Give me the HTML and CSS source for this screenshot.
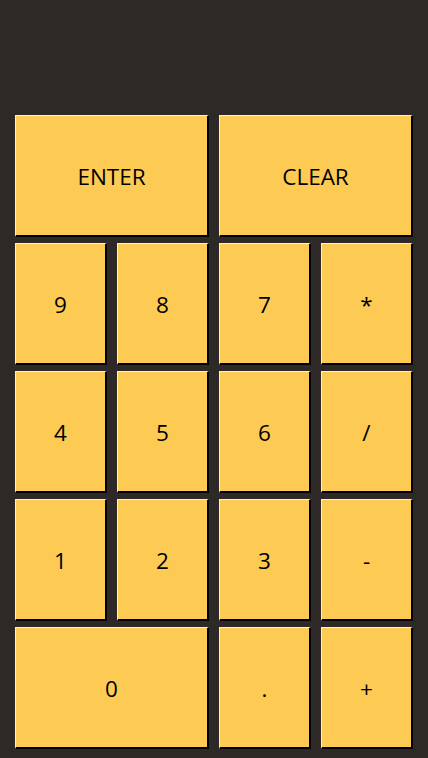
FILE: index.html
```html
<!DOCTYPE html>
<html>
<head>
<meta charset="utf-8">
<link rel="stylesheet" href="styles.css">
</head>
<body>
<div class="calc">
  <div class="display"></div>
  <div class="keys">
    <button class="key wide">ENTER</button>
    <button class="key wide">CLEAR</button>
    <button class="key">9</button>
    <button class="key">8</button>
    <button class="key">7</button>
    <button class="key">*</button>
    <button class="key">4</button>
    <button class="key">5</button>
    <button class="key">6</button>
    <button class="key">/</button>
    <button class="key">1</button>
    <button class="key">2</button>
    <button class="key">3</button>
    <button class="key">-</button>
    <button class="key wide">0</button>
    <button class="key">.</button>
    <button class="key">+</button>
  </div>
</div>
</body>
</html>
```

FILE: styles.css
```css
html, body {
  margin: 0;
  padding: 0;
  background: #2c2926;
}
.calc {
  width: 428px;
  height: 758px;
  box-sizing: border-box;
  padding: 0 15px;
}
.display {
  height: 115px;
}
.keys {
  display: grid;
  grid-template-columns: repeat(4, 92px);
  grid-auto-rows: 122px;
  column-gap: 10px;
  row-gap: 6px;
}
.key {
  margin: 0;
  padding: 2px 0 0 0;
  background: #fdcb53;
  border-style: solid;
  border-width: 1px 2px 2px 1px;
  border-color: #fff4c4 #000 #000 #fff4c4;
  font-family: "Open Sans", sans-serif;
  font-size: 22.5px;
  color: #000;
  display: flex;
  align-items: center;
  justify-content: center;
}
.wide {
  grid-column: span 2;
}
```
